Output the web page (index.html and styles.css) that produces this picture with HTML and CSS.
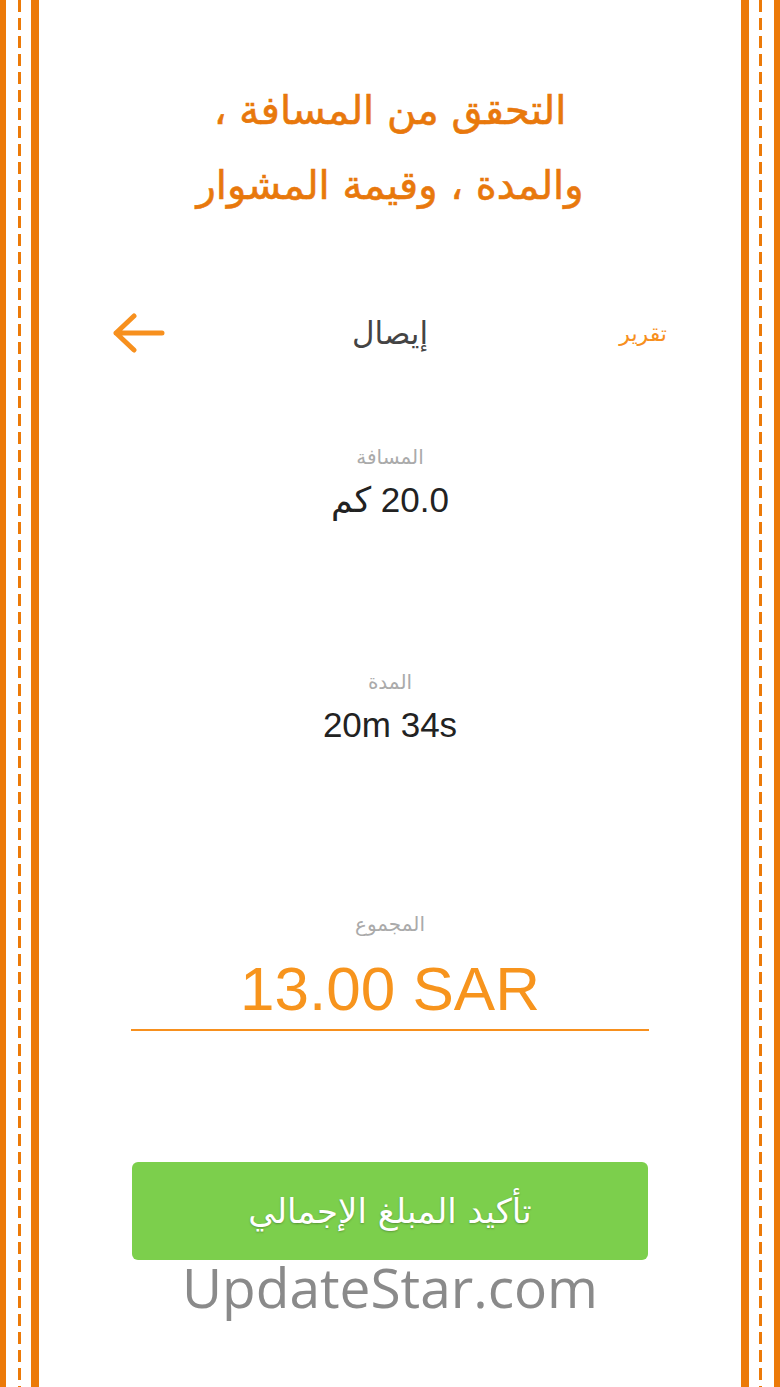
FILE: index.html
```html
<!DOCTYPE html>
<html lang="ar">
<head>
  <meta charset="UTF-8" />
  <meta name="viewport" content="width=device-width, initial-scale=1.0" />
  <title>إيصال</title>
  <link rel="stylesheet" href="styles.css">
</head>
<body>
  <div class="page">
    <div class="edge edge-left">
      <span class="solid thin"></span>
      <span class="dash"></span>
      <span class="solid thick"></span>
    </div>

    <main class="content">
      <h1 class="title">التحقق من المسافة ،<br>والمدة ، وقيمة المشوار</h1>

      <div class="bar">
        <a class="report">تقرير</a>
        <span class="bar-title">إيصال</span>
        <span class="back-wrap">
          <svg class="back" width="52" height="40" viewBox="0 0 52 40">
            <path d="M49 20H3M21 3L3 20l18 17" fill="none" stroke="#f7901e" stroke-width="5" stroke-linecap="round" stroke-linejoin="round"/>
          </svg>
        </span>
      </div>

      <div class="field first">
        <div class="label">المسافة</div>
        <div class="value">20.0 كم</div>
      </div>

      <div class="field second">
        <div class="label">المدة</div>
        <div class="value" dir="ltr">20m 34s</div>
      </div>

      <div class="field total">
        <div class="label">المجموع</div>
        <div class="value" dir="ltr">13.00 SAR</div>
      </div>

      <button class="confirm">تأكيد المبلغ الإجمالي</button>
      <div class="watermark" dir="ltr">UpdateStar.com</div>
    </main>

    <div class="edge edge-right">
      <span class="solid thick"></span>
      <span class="dash"></span>
      <span class="solid thin"></span>
    </div>
  </div>
</body>
</html>
```

FILE: styles.css
```css
html, body {
  margin: 0;
  background: white;
}
body {
  font-family: 'DejaVu Sans', 'Noto Sans', sans-serif;
}
.page {
  display: flex;
  direction: ltr;
  min-height: 1387px;
}
.edge {
  display: flex;
  width: 39px;
  justify-content: space-between;
}
.edge-left .dash { margin-left: 2px; }
.edge-right .dash { margin-right: 2px; }
.solid { background: #ec7a08; }
.thin { width: 6px; }
.thick { width: 8px; }
.dash {
  width: 3px;
  background: repeating-linear-gradient(to bottom, #ec7a08 0 12px, transparent 12px 18px);
}

.content {
  flex: 1;
  direction: rtl;
  display: flex;
  flex-direction: column;
  align-items: center;
}
.title {
  margin: 73px 0 0;
  font-size: 40px;
  font-weight: normal;
  line-height: 75px;
  color: #e8780c;
  text-align: center;
  -webkit-text-stroke: 0.6px #e8780c;
}

.bar {
  margin-top: 85px;
  width: 554px;
  height: 50px;
  display: flex;
  align-items: center;
  justify-content: space-between;
}
.report {
  width: 80px;
  font-size: 22px;
  color: #f7901e;
}
.bar-title {
  font-size: 31px;
  color: #444;
}
.back-wrap {
  width: 80px;
  display: flex;
  justify-content: flex-end;
}
.back {
  display: block;
}

.field {
  text-align: center;
}
.field.first { margin-top: 84px; }
.field.second { margin-top: 145px; }
.label {
  font-size: 20px;
  line-height: 30px;
  color: #aaa;
}
.value {
  margin-top: 6px;
  font-family: 'Liberation Sans', 'DejaVu Sans', sans-serif;
  font-size: 35px;
  line-height: 44px;
  color: #222;
}
.total {
  margin-top: 162px;
  width: 518px;
  padding-bottom: 4px;
  border-bottom: 2px solid #f7901e;
}
.total .value {
  margin-top: 14px;
  font-size: 62px;
  line-height: 72px;
  color: #f7941d;
}

.confirm {
  margin-top: 131px;
  width: 516px;
  height: 98px;
  border: none;
  border-radius: 6px;
  background: #7ccf4c;
  color: white;
  font-family: inherit;
  font-size: 34px;
  text-shadow: 0 1px 2px rgba(0,0,0,0.25);
  cursor: pointer;
}
.watermark {
  font-family: 'Open Sans', sans-serif;
  font-size: 55px;
  line-height: 54px;
  color: #8a8a8a;
}
```
